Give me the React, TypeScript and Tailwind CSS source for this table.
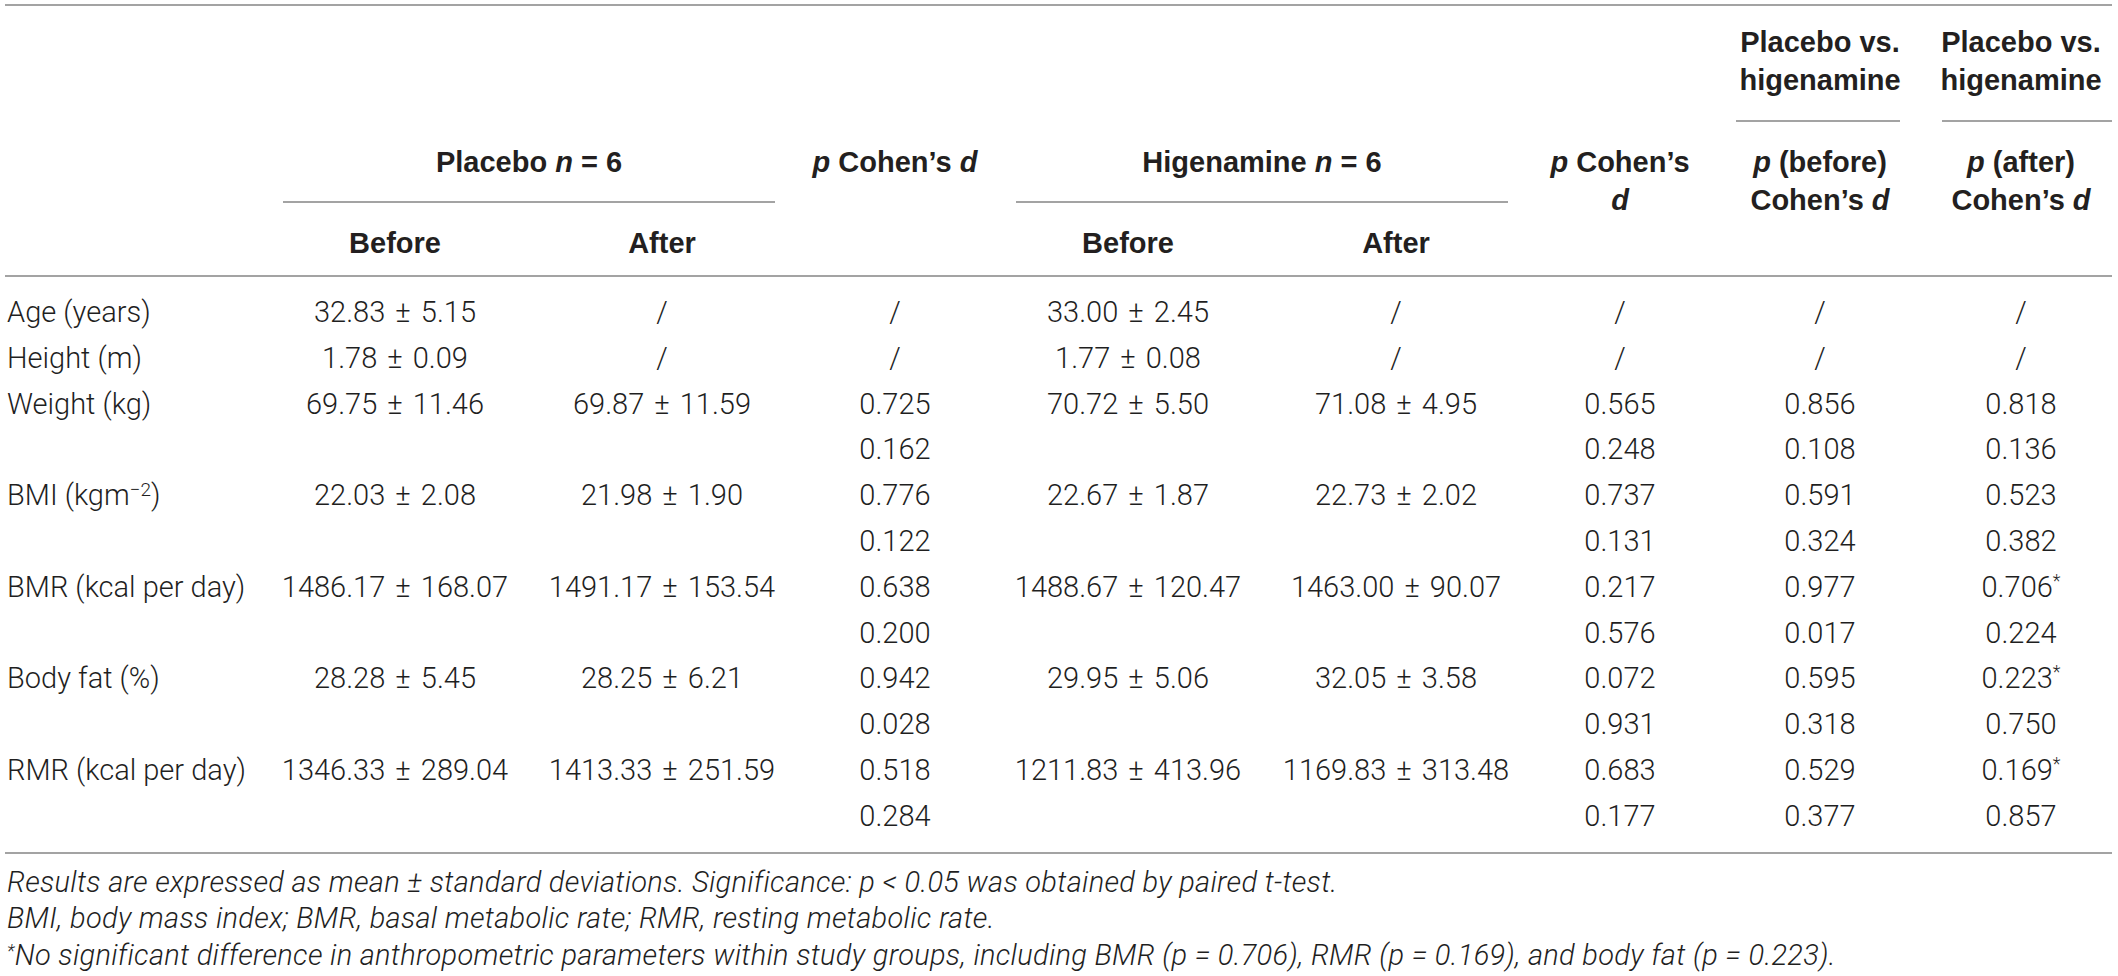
import React from 'react'

const COLS =
  'grid grid-cols-[257px_266px_268px_198px_268px_268px_180px_220px_182px]'

const Line = ({ className = '' }: { className?: string }) => (
  <div className={`h-[2px] bg-[#a3a3a3] ${className}`} />
)

const Star = () => <sup className="top-[-0.55em] text-[18px]">*</sup>

type Row = {
  label?: React.ReactNode
  cells: React.ReactNode[]
}

const pm = (a: string, b: string) => `${a} ± ${b}`

const ROWS: Row[] = [
  { label: 'Age (years)', cells: [pm('32.83', '5.15'), '/', '/', pm('33.00', '2.45'), '/', '/', '/', '/'] },
  { label: 'Height (m)', cells: [pm('1.78', '0.09'), '/', '/', pm('1.77', '0.08'), '/', '/', '/', '/'] },
  {
    label: 'Weight (kg)',
    cells: [pm('69.75', '11.46'), pm('69.87', '11.59'), '0.725', pm('70.72', '5.50'), pm('71.08', '4.95'), '0.565', '0.856', '0.818'],
  },
  { cells: ['', '', '0.162', '', '', '0.248', '0.108', '0.136'] },
  {
    label: (
      <>
        BMI (kgm<sup className="top-[-0.5em] text-[19px]">−2</sup>)
      </>
    ),
    cells: [pm('22.03', '2.08'), pm('21.98', '1.90'), '0.776', pm('22.67', '1.87'), pm('22.73', '2.02'), '0.737', '0.591', '0.523'],
  },
  { cells: ['', '', '0.122', '', '', '0.131', '0.324', '0.382'] },
  {
    label: 'BMR (kcal per day)',
    cells: [
      pm('1486.17', '168.07'),
      pm('1491.17', '153.54'),
      '0.638',
      pm('1488.67', '120.47'),
      pm('1463.00', '90.07'),
      '0.217',
      '0.977',
      <>
        0.706
        <Star />
      </>,
    ],
  },
  { cells: ['', '', '0.200', '', '', '0.576', '0.017', '0.224'] },
  {
    label: 'Body fat (%)',
    cells: [
      pm('28.28', '5.45'),
      pm('28.25', '6.21'),
      '0.942',
      pm('29.95', '5.06'),
      pm('32.05', '3.58'),
      '0.072',
      '0.595',
      <>
        0.223
        <Star />
      </>,
    ],
  },
  { cells: ['', '', '0.028', '', '', '0.931', '0.318', '0.750'] },
  {
    label: 'RMR (kcal per day)',
    cells: [
      pm('1346.33', '289.04'),
      pm('1413.33', '251.59'),
      '0.518',
      pm('1211.83', '413.96'),
      pm('1169.83', '313.48'),
      '0.683',
      '0.529',
      <>
        0.169
        <Star />
      </>,
    ],
  },
  { cells: ['', '', '0.284', '', '', '0.177', '0.377', '0.857'] },
]

export default function App() {
  return (
    <div className="h-[976px] w-[2118px] overflow-hidden bg-white font-['Liberation_Sans',Arial,sans-serif] text-[#231f20]">
      <div className="ml-[5px] w-[2107px] pt-[4px]">
        <Line />

        {/* Header: three tiers of column titles */}
        <div className={`${COLS} whitespace-nowrap text-center text-[29px] font-bold leading-[38px]`}>
          <div className="col-start-8 row-start-1 pt-[17px]">
            <div>Placebo vs.</div>
            <div>higenamine</div>
            <Line className="mt-[21px] ml-[26px] mr-[30px]" />
          </div>
          <div className="col-start-9 row-start-1 pt-[17px]">
            <div>Placebo vs.</div>
            <div>higenamine</div>
            <Line className="mt-[21px] ml-[12px]" />
          </div>

          <div className="col-span-2 col-start-2 row-start-2 pt-[21px]">
            <div>
              Placebo <i>n</i> = 6
            </div>
            <Line className="mt-[20px] mx-[21px]" />
          </div>
          <div className="col-start-4 row-start-2 pt-[21px]">
            <i>p</i> Cohen’s <i>d</i>
          </div>
          <div className="col-span-2 col-start-5 row-start-2 pt-[21px]">
            <div>
              Higenamine <i>n</i> = 6
            </div>
            <Line className="mt-[20px] mx-[22px]" />
          </div>
          <div className="col-start-7 row-span-2 row-start-2 pt-[21px]">
            <div>
              <i>p</i> Cohen’s
            </div>
            <div>
              <i>d</i>
            </div>
          </div>
          <div className="col-start-8 row-span-2 row-start-2 pt-[21px]">
            <div>
              <i>p</i> (before)
            </div>
            <div>
              Cohen’s <i>d</i>
            </div>
          </div>
          <div className="col-start-9 row-span-2 row-start-2 pt-[21px]">
            <div>
              <i>p</i> (after)
            </div>
            <div>
              Cohen’s <i>d</i>
            </div>
          </div>

          <div className="col-start-2 row-start-3 pt-[21px] pb-[13px]">Before</div>
          <div className="col-start-3 row-start-3 pt-[21px] pb-[13px]">After</div>
          <div className="col-start-5 row-start-3 pt-[21px] pb-[13px]">Before</div>
          <div className="col-start-6 row-start-3 pt-[21px] pb-[13px]">After</div>
        </div>

        <Line />

        {/* Body */}
        <div className="pt-[13px] pb-[12px] font-['Roboto','Liberation_Sans',sans-serif] text-[29px] font-light leading-[45.8px] text-[#1f1f1f]">
          {ROWS.map((r, i) => (
            <div key={i} className={`${COLS} h-[45.8px] items-center whitespace-nowrap`}>
              <div className="pl-[2px]">{r.label}</div>
              {r.cells.map((c, j) => (
                <div key={j} className="flex justify-center [word-spacing:3px]">
                  <span>{c}</span>
                </div>
              ))}
            </div>
          ))}
        </div>

        <Line />

        <div className="pt-[10px] pl-[2px] font-['Roboto','Liberation_Sans',sans-serif] text-[29px] font-light italic leading-[36.5px] tracking-[0.3px] text-[#1f1f1f]">
          <div>
            Results are expressed as mean ± standard deviations. Significance: p &lt; 0.05 was obtained by paired
            t-test.
          </div>
          <div>BMI, body mass index; BMR, basal metabolic rate; RMR, resting metabolic rate.</div>
          <div>
            <sup className="top-[-0.4em] text-[18px]">*</sup>No significant difference in anthropometric parameters
            within study groups, including BMR (p = 0.706), RMR (p = 0.169), and body fat (p = 0.223).
          </div>
        </div>
      </div>
    </div>
  )
}
